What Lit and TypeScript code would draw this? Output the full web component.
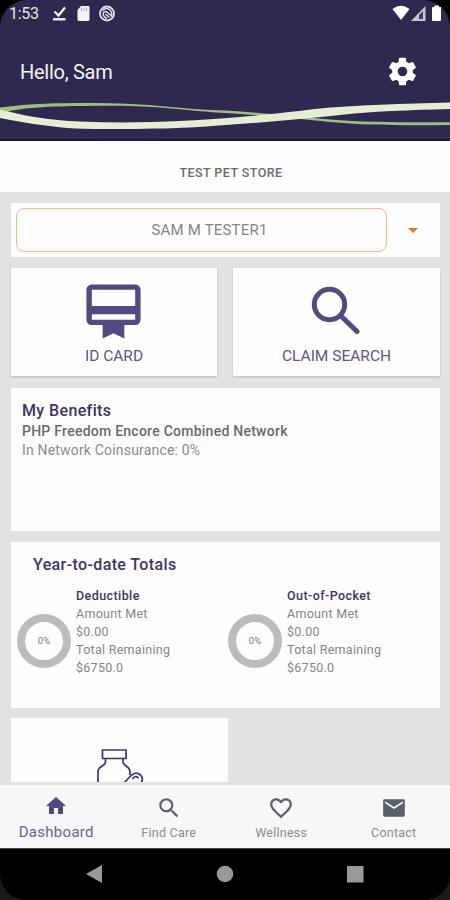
import { LitElement, html, css, svg } from "lit";
import { customElement, property } from "lit/decorators.js";

const paths = {
  cog: "M12,15.5A3.5,3.5 0 0,1 8.5,12A3.5,3.5 0 0,1 12,8.5A3.5,3.5 0 0,1 15.5,12A3.5,3.5 0 0,1 12,15.5M19.43,12.97C19.47,12.65 19.5,12.33 19.5,12C19.5,11.67 19.47,11.34 19.43,11L21.54,9.37C21.73,9.22 21.78,8.95 21.66,8.73L19.66,5.27C19.54,5.05 19.27,4.96 19.05,5.05L16.56,6.05C16.04,5.66 15.5,5.32 14.87,5.07L14.5,2.42C14.46,2.18 14.25,2 14,2H10C9.75,2 9.54,2.18 9.5,2.42L9.13,5.07C8.5,5.32 7.96,5.66 7.44,6.05L4.95,5.05C4.73,4.96 4.46,5.05 4.34,5.27L2.34,8.73C2.21,8.95 2.27,9.22 2.46,9.37L4.57,11C4.53,11.34 4.5,11.67 4.5,12C4.5,12.33 4.53,12.65 4.57,12.97L2.46,14.63C2.27,14.78 2.21,15.05 2.34,15.27L4.34,18.73C4.46,18.95 4.73,19.03 4.95,18.95L7.44,17.94C7.96,18.34 8.5,18.68 9.13,18.93L9.5,21.58C9.54,21.82 9.75,22 10,22H14C14.25,22 14.46,21.82 14.5,21.58L14.87,18.93C15.5,18.67 16.04,18.34 16.56,17.94L19.05,18.95C19.27,19.03 19.54,18.95 19.66,18.73L21.66,15.27C21.78,15.05 21.73,14.78 21.54,14.63L19.43,12.97Z",
  card: "M20 2H4c-1.1 0-2 .9-2 2v11c0 1.1.9 2 2 2h4v5l4-2 4 2v-5h4c1.1 0 2-.9 2-2V4c0-1.1-.9-2-2-2zm0 13H4v-2h16v2zm0-5H4V4h16v6z",
  search: "M9.5,3A6.5,6.5 0 0,1 16,9.5C16,11.11 15.41,12.59 14.44,13.73L14.71,14H15.5L20.5,19L19,20.5L14,15.5V14.71L13.73,14.44C12.59,15.41 11.11,16 9.5,16A6.5,6.5 0 0,1 3,9.5A6.5,6.5 0 0,1 9.5,3M9.5,5C7,5 5,7 5,9.5C5,12 7,14 9.5,14C12,14 14,12 14,9.5C14,7 12,5 9.5,5Z",
  home: "M10,20V14H14V20H19V12H22L12,3L2,12H5V20H10Z",
  heart: "M12.1,18.55L12,18.65L11.89,18.55C7.14,14.24 4,11.39 4,8.5C4,6.5 5.5,5 7.5,5C9.04,5 10.54,6 11.07,7.36H12.93C13.46,6 14.96,5 16.5,5C18.5,5 20,6.5 20,8.5C20,11.39 16.86,14.24 12.1,18.55M16.5,3C14.76,3 13.09,3.81 12,5.08C10.91,3.81 9.24,3 7.5,3C4.42,3 2,5.41 2,8.5C2,12.27 5.4,15.36 10.55,20.03L12,21.35L13.45,20.03C18.6,15.36 22,12.27 22,8.5C22,5.41 19.58,3 16.5,3Z",
  mail: "M20.2,7.6L12,13L3.800,7.600V5.800L12,11L20.200,5.800M20.800,4H3.200C2.500,4 2,4.500 2,5.200V18.800A1.200,1.200 0 0,0 3.200,20H20.800A1.200,1.200 0 0,0 22,18.800V5.200C22,4.500 21.500,4 20.800,4Z",
};

const icon = (name: keyof typeof paths, size: number) =>
  html`<svg width=${size} height=${size} viewBox="0 0 24 24" fill="currentColor">${svg`<path d=${paths[name]} />`}</svg>`;

@customElement("app-header")
class AppHeader extends LitElement {
  static styles = css`
    :host { display: flex; flex-direction: column; height: 141px; box-sizing: border-box; background: #2f2950; border-bottom: 2px solid #1b1644; border-radius: 27px 27px 0 0; color: #fff; }
    svg { display: block; }
    .status { display: flex; align-items: center; height: 28px; padding: 0 7px 0 9px; }
    .time { font-size: 16px; line-height: 30px; width: 42px; color: #e4e2ea; letter-spacing: -0.3px; }
    .right { margin-left: auto; }
    .title { display: flex; justify-content: space-between; height: 68px; padding: 12px 31px 0 20px; box-sizing: border-box; }
    .hello { font-size: 20px; line-height: 65px; height: 56px; color: #f4f3f7; letter-spacing: -0.27px; }
    .gear { margin-top: 15px; height: 33px; }
  `;
  render() {
    return html`
      <div class="status">
        <span class="time">1:53</span>
        <svg width="70" height="28" viewBox="0 0 70 28" fill="none">
          <path d="M3.500 11.500L7.500 15.500L14 7.500" stroke="#fff" stroke-width="2.200" />
          <path d="M2 18H14.500V20.500H2z" fill="#e9e8ee" />
          <path d="M30 6H37.500Q38.500 6 38.500 7V19.500Q38.500 21 37 21H28Q26.500 21 26.500 19.500V10z" fill="#f4f3f7" />
          <path d="M30.500 8V11M33 7.500V11M35.500 7.500V11" stroke="#a9a5b8" stroke-width="1" />
          <circle cx="56" cy="13.500" r="7" stroke="#e0dee6" stroke-width="1.800" />
          <path d="M51.500 10.500Q56 6.500 59.500 10.500Q61.500 14 60.500 16L56.500 12.500Q54 10.500 52.500 12.500Q51 16 56 18.500M54.500 14L58.500 17.500" stroke="#dddbe4" stroke-width="1.500" />
        </svg>
        <svg class="right" width="52" height="28" viewBox="0 0 52 28">
          <path d="M1.500 9Q10 2.500 18.500 9L10 20z" fill="#fff" />
          <path d="M20 21L34.500 6V21z" fill="#c9c6d3" />
          <path d="M28 19V15L32 11V19z" fill="#423b63" />
          <path d="M42 7H43.500V5.500H48V7H50V20Q50 21 49 21H42Q41 21 41 20V8Q41 7 42 7z" fill="#fff" />
        </svg>
      </div>
      <div class="title">
        <span class="hello">Hello, Sam</span>
        <span class="gear">${icon("cog", 33)}</span>
      </div>
      <svg width="450" height="43" viewBox="0 96 450 43">
        <path d="M0 107.500C30 103.500 60 103 85 103C120 103 145 104.500 165 106.500C190 109 210 110 225 110.500C265 113 300 117 330 119.500C365 122.500 410 122.500 450 122.300V125C410 125.500 365 125.500 330 122C300 119 265 115.500 225 113C200 111.500 185 109.500 160 107.500C135 105.500 110 105.500 85 106C50 106 20 108 6 112L0 113z" fill="#9fbd80" />
        <path d="M0 109.500C25 116 50 120.500 80 121.500C115 123 150 122.500 180 121C225 119 280 113.500 315 109C355 105 405 103.500 450 102.500V109C410 110 370 111.500 340 115C300 119.500 240 124.500 190 127.500C155 129 110 129.500 75 128.500C45 126.500 20 122 0 118z" fill="#e5eed4" />
      </svg>
    `;
  }
}

@customElement("ring-stat")
class RingStat extends LitElement {
  @property() heading = "";
  @property() met = "";
  @property() remaining = "";
  static styles = css`
    :host { display: flex; flex: none; width: 211px; }
    .ring { width: 54px; height: 54px; flex: none; box-sizing: border-box; border: 8.500px solid #bcbcbc; border-radius: 50%; margin: 27px 5px 0 0; font-size: 9.500px; line-height: 37px; text-align: center; color: #777; }
    .lines { font-size: 12.500px; line-height: 17.900px; color: #858585; letter-spacing: 0.28px; white-space: nowrap; }
    .heading { font-weight: 500; color: #3d3466; letter-spacing: 0.42px; }
  `;
  render() {
    return html`
      <div class="ring">0%</div>
      <div class="lines">
        <div class="heading">${this.heading}</div>
        <div>Amount Met</div>
        <div>${this.met}</div>
        <div>Total Remaining</div>
        <div>${this.remaining}</div>
      </div>
    `;
  }
}

@customElement("app-root")
class AppRoot extends LitElement {
  static styles = css`
    :host { display: flex; flex-direction: column; width: 450px; height: 900px; background: #000; overflow: hidden; font-family: Roboto, "Liberation Sans", sans-serif; }
    svg { display: block; }
    .store { height: 51px; background: #fdfdfd; text-align: center; font-size: 12.500px; letter-spacing: 0.45px; font-weight: 500; line-height: 63px; color: #6a6a6a; padding-left: 12px; }
    .body { display: flex; flex-direction: column; height: 593px; box-sizing: border-box; padding: 11px 10px 0 11px; background: #e2e2e2; overflow: hidden; }
    .card { background: #fdfdfd; flex: none; box-sizing: border-box; }
    .select { display: flex; align-items: center; height: 54px; padding-left: 5px; }
    .field { width: 371px; height: 44px; box-sizing: border-box; border: 1.500px solid #f0b994; border-radius: 8px; text-align: center; font-size: 15px; letter-spacing: 0.2px; line-height: 43px; color: #858585; padding-left: 16px; }
    .caret { margin-left: 21px; border: 5px solid transparent; border-top-color: #e07a26; border-bottom: 0; }
    .tiles { display: flex; gap: 16px; margin-top: 11px; }
    .tile { width: 206px; height: 108px; display: flex; flex-direction: column; align-items: center; padding-top: 11px; color: #544a80; box-shadow: 0 1px 2px #bbb; }
    .tile + .tile { width: 207px; }
    .tile svg { margin-right: 1px; }
    .tile span { font-size: 15.500px; line-height: 20px; margin-top: 2px; color: #5e5680; }
    .benefits { height: 143px; margin-top: 12px; padding: 13px 11px; }
    h2 { margin: 0; font-size: 16px; line-height: 20px; font-weight: 500; color: #3d3466; letter-spacing: 0.38px; }
    .network { font-size: 14px; letter-spacing: 0.25px; line-height: 20px; font-weight: 500; color: #6a6a6a; }
    .coins { font-size: 14px; letter-spacing: 0.18px; line-height: 18px; color: #8b8b8b; }
    .totals { height: 166px; margin-top: 11px; padding: 13px 6px; }
    .totals h2 { padding-left: 16px; }
    .stats { display: flex; margin-top: 12px; }
    .rx { width: 217px; height: 64px; margin-top: 10px; padding: 30px 0 0 84px; overflow: hidden; }
    .tabs { display: flex; height: 63px; box-sizing: border-box; background: #f7f7f7; }
    .tab { width: 112.500px; display: flex; flex-direction: column; align-items: center; padding-top: 10px; font-size: 12.500px; letter-spacing: 0.25px; line-height: 18px; color: #8b8b8b; }
    .tab svg { color: #59616b; }
    .tab span { margin-top: 3px; }
    .active { color: #6b648c; font-size: 15px; letter-spacing: 0.3px; padding-top: 9px; }
    .active svg { color: #51477c; }
    .active span { margin-top: 5px; }
    .system { height: 52px; border-top: 1px solid #444; box-sizing: border-box; background: #1a1a1a; }
    .keys { display: flex; height: 51px; background: #000; border-radius: 0 0 26px 26px; }
  `;
  render() {
    return html`
      <app-header></app-header>
      <div class="store">TEST PET STORE</div>
      <div class="body">
        <div class="card select"><div class="field">SAM M TESTER1</div><div class="caret"></div></div>
        <div class="tiles">
          <div class="card tile">${icon("card", 65)}<span>ID CARD</span></div>
          <div class="card tile">
            <svg width="65" height="65" viewBox="0 0 65 65" fill="none" stroke="currentColor">
              <circle cx="25.500" cy="25.500" r="15.200" stroke-width="5" />
              <path d="M36.500 36.500L53 52.500" stroke-width="5.200" stroke-linecap="round" stroke-dasharray="100" />
            </svg>
            <span>CLAIM SEARCH</span>
          </div>
        </div>
        <div class="card benefits">
          <h2>My Benefits</h2>
          <div class="network">PHP Freedom Encore Combined Network</div>
          <div class="coins">In Network Coinsurance: 0%</div>
        </div>
        <div class="card totals">
          <h2>Year-to-date Totals</h2>
          <div class="stats">
            <ring-stat heading="Deductible" met="$0.00" remaining="$6750.0"></ring-stat>
            <ring-stat heading="Out-of-Pocket" met="$0.00" remaining="$6750.0"></ring-stat>
          </div>
        </div>
        <div class="card rx">
          <svg width="50" height="34" viewBox="0 0 50 34" fill="none" stroke="#40366c" stroke-width="1.700">
            <path d="M7.500 2H31V10.500H7.500z M10.500 10.500V14Q10.500 15.500 8.500 17L4.500 20Q3 21.500 3 24V40M28 10.500V14Q28 15.500 30 17L33 19.500Q35 21 35 25V27M29 35L36 27.500Q41 23 45.500 27Q49 31 46 35M37.500 31Q40 27 43.500 30" />
          </svg>
        </div>
      </div>
      <div class="tabs">
        <div class="tab active">${icon("home", 24)}<span>Dashboard</span></div>
        <div class="tab">${icon("search", 26)}<span>Find Care</span></div>
        <div class="tab">${icon("heart", 26)}<span>Wellness</span></div>
        <div class="tab">${icon("mail", 26)}<span>Contact</span></div>
      </div>
      <div class="system">
        <div class="keys">
          <svg width="450" height="51" viewBox="0 849 450 51" fill="#999">
            <path d="M86 874L102 865V883z" /><circle cx="225" cy="874" r="8.300" /><path d="M347 866H363.500V882.500H347z" />
          </svg>
        </div>
      </div>
    `;
  }
}
